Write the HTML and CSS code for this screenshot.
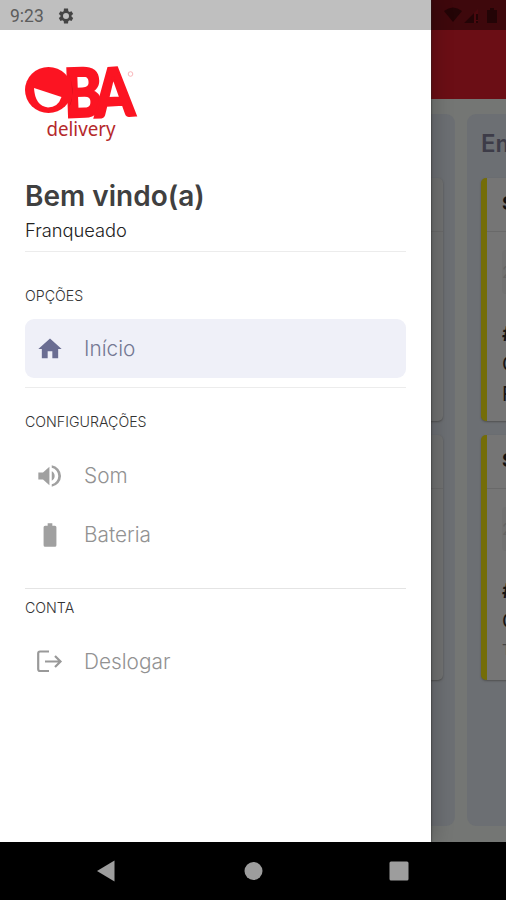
FILE: index.html
```html
<!DOCTYPE html>
<html lang="pt-BR">
<head>
<meta charset="utf-8">
<title>OBA delivery</title>
<link rel="stylesheet" href="styles.css">
</head>
<body>
<div class="screen">
  <div class="app">
    <div class="app-status">
      <svg width="56" height="18" viewBox="0 0 56 18">
        <path d="M0 4Q9 -3 18 4L9 15Z" fill="#230406"/>
        <path d="M20 16L34 2V16Z" fill="#4b080e"/><path d="M20 16L30 6V16ZM32 7h2v6h-2zM32 14h2v2h-2z" fill="#230406"/>
        <path d="M43 3h3V1h4v2h3v13H43Z" fill="#230406"/>
      </svg>
    </div>
    <div class="app-header"></div>
    <div class="board">
      <section class="column previous">
        <article class="card"><div class="card-top"></div></article>
        <article class="card"><div class="card-top"></div></article>
      </section>
      <section class="column">
        <h2>Em</h2>
        <article class="card marked">
          <div class="card-top">S</div>
          <div class="chip">2</div>
          <p><b>#</b></p><p>C</p><p>R</p>
        </article>
        <article class="card marked">
          <div class="card-top">S</div>
          <div class="chip">2</div>
          <p><b>#</b></p><p>C</p><p class="faint">T</p>
        </article>
      </section>
    </div>
  </div>

  <aside class="drawer">
    <div class="status">
      <span>9:23</span>
      <svg width="18" height="18" viewBox="0 0 24 24"><path fill="#444" fill-rule="evenodd" d="M19.4 13a7.500 7.500 0 0 0 0-2l2.200-1.700-2.200-3.800-2.600 1a8 8 0 0 0-1.700-1L14.700 2H9.300l-.4 3.500a8 8 0 0 0-1.700 1l-2.600-1-2.200 3.800L4.600 11a7.500 7.500 0 0 0 0 2l-2.200 1.700 2.200 3.800 2.600-1a8 8 0 0 0 1.700 1l.4 3.500h5.400l.4-3.500a8 8 0 0 0 1.700-1l2.600 1 2.200-3.800zM12 8a4 4 0 1 1 0 8 4 4 0 0 1 0-8z"/></svg>
    </div>
    <div class="content">
      <svg class="logo" width="116" height="82" viewBox="24 62 116 82">
        <text class="oba" x="64" y="116.500" textLength="38" lengthAdjust="spacingAndGlyphs" transform="rotate(-2 84 92)">B</text>
        <text class="oba" x="94" y="116.500" textLength="40" lengthAdjust="spacingAndGlyphs" transform="rotate(-3 114 92)">A</text>
        <ellipse cx="48.500" cy="90" rx="23.500" ry="23" fill="#fc1422"/>
        <path d="M67 72Q77 88 69 107Q73 101 72 90Q72 79 67 72Z" fill="#c90f1b"/>
        <path d="M34 88L61.500 97Q58 107.500 48 107.500Q35 106 34 88Z" fill="#fff"/>
        <circle cx="130.500" cy="74" r="2.300" fill="none" stroke="#f7a4a9" stroke-width=".8"/>
        <text class="delivery" x="46.500" y="136" textLength="69" lengthAdjust="spacingAndGlyphs">delivery</text>
      </svg>
      <h1><span>Bem vindo(a)</span></h1>
      <div class="user">Franqueado</div>
      <h3 class="options">OPÇÕES</h3>
      <div class="item active">
        <svg width="28" height="28" viewBox="0 0 24 24"><path d="M10 20v-6h4v6h5v-8h3L12 3 2 12h3v8z"/></svg>
        <span class="inicio">Início</span>
      </div>
      <h3 class="settings">CONFIGURAÇÕES</h3>
      <div class="item">
        <svg width="28" height="28" viewBox="0 0 24 24"><path d="M2 9v6h4l5.500 5V4L6 9zM16 12a4.500 4.500 0 0 0-2.500-4v8a4.500 4.500 0 0 0 2.500-4zM13.500 2.800v2.100a7.300 7.300 0 0 1 0 14.200v2.100a9.300 9.300 0 0 0 0-18.400z"/></svg>
        <span class="som">Som</span>
      </div>
      <div class="item">
        <svg width="28" height="28" viewBox="0 0 24 24"><path d="M16.200 4H14V2h-4v2H7.800Q6.500 4 6.500 5.300v15.400Q6.500 22 7.800 22h8.400q1.300 0 1.300-1.300V5.300Q17.500 4 16.200 4z"/></svg>
        <span class="bateria">Bateria</span>
      </div>
      <h3 class="account">CONTA</h3>
      <div class="item logout">
        <svg width="28" height="28" viewBox="0 0 28 28"><path class="line" d="M13 3.500H4Q2.200 3.500 2.200 5.500v15.500Q2.200 23 4 23h9M9 13.500h15M19 8l5.500 5.500L19 19"/></svg>
        <span class="deslogar">Deslogar</span>
      </div>
    </div>
  </aside>

  <nav class="navbar">
    <svg width="506" height="58" viewBox="0 0 506 58" fill="#9d9d9d"><path d="M97 29L114.500 18.500V39.500Z"/><circle cx="253.500" cy="29" r="9"/><rect x="389.500" y="19.500" width="19" height="19" rx="1.500"/></svg>
  </nav>
</div>
</body>
</html>
```
FILE: styles.css
```css
* { box-sizing: border-box; }
body { margin: 0; font-family: Inter, Roboto, sans-serif; }
h1, h2, h3, p { margin: 0; }
svg { display: block; flex: none; }

.screen { position: relative; width: 506px; height: 900px; overflow: hidden; display: flex; flex-direction: column; background: #000; }

.app { height: 842px; display: flex; flex-direction: column; background: #747674; overflow: hidden; }
.app-status { height: 30px; flex: none; background: #3e080c; padding: 7px 0 0 444px; }
.app-header { height: 69px; flex: none; background: #6b0e15; }
.board { display: flex; gap: 12px; padding: 15px 0 16px 161px; height: 743px; }
.column { flex: none; width: 294px; height: 712px; border-radius: 9px; background: #6c6f73; padding: 0 14px; display: flex; flex-direction: column; gap: 14px; }
.column.previous { padding: 64px 12px 0; }
.column h2 { height: 50px; padding-top: 14px; font-size: 24px; line-height: 32px; font-weight: 600; color: #3d3c48; }
.card { flex: none; height: 243px; border-radius: 5px; background: #757575; box-shadow: 0 1px 2px #505050; }
.previous .card { background: #707171; }
.card + .card { height: 245px; }
.card.marked { border-left: 6px solid #746d08; }
.card-top { height: 54px; border-bottom: 1px solid #696969; }
.marked .card-top { padding-left: 15px; font-size: 19px; line-height: 52px; font-weight: 700; color: #111; }
.chip { width: 60px; height: 44px; margin: 18px 0 25px 15px; border-radius: 4px; background: #717171; color: #646464; line-height: 44px; font-size: 16px; }
.card p { padding-left: 15px; font-size: 20px; line-height: 30px; color: #151515; }
.card p.faint { font-size: 15px; color: #444; line-height: 28px; }

.drawer { position: absolute; left: 0; top: 0; width: 431px; height: 842px; background: #fff; box-shadow: 0 0 2px #222, 4px 0 18px rgba(0, 0, 0, .2); }
.status { height: 30px; background: #bfbfbf; display: flex; align-items: center; gap: 13px; padding: 1px 0 0 10px; font: 17.500px Roboto, sans-serif; color: #5c5c5c; }
.content { padding: 32px 25px 0; }
.logo { margin-left: -1px; }
.oba { font: 900 67px Lato, sans-serif; fill: #fc1422; stroke: #fc1422; stroke-width: 2.500px; }
.delivery { font: 400 19px "Noto Sans", sans-serif; fill: #b5282b; }

h1 { margin-top: 34px; height: 36px; line-height: 37px; font-size: 28px; font-weight: 600; color: #404040; white-space: nowrap; }
.user { height: 38px; padding-top: 2px; font-size: 18.300px; line-height: 28px; font-weight: 300; color: #222; border-bottom: 1px solid #ececec; }
h3 { font-size: 14.200px; line-height: 20px; font-weight: 300; color: #333; }
.options { margin-top: 34px; }
.item { height: 59px; border-radius: 9px; display: flex; align-items: center; gap: 20px; padding-left: 11px; font-size: 20.800px; font-weight: 300; color: #929292; fill: #a0a0a0; }
.item.active { margin-top: 13px; background: #eff0f8; color: #747893; fill: #6a6d92; }
.settings { border-top: 1px solid #ececec; margin-top: 9px; padding-top: 24px; margin-bottom: 14px; }
.account { border-top: 1px solid #e4e4e4; margin-top: 24px; padding-top: 9px; margin-bottom: 14px; }
.line { fill: none; stroke: #999; stroke-width: 2.200px; }
.navbar { position: relative; height: 58px; background: #000; }
```
